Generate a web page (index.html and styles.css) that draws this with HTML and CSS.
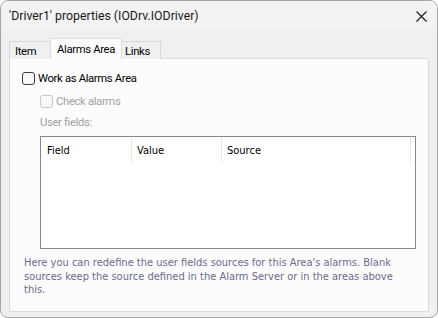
FILE: index.html
```html
<!DOCTYPE html>
<html>
<head>
<meta charset="utf-8">
<link rel="stylesheet" href="styles.css">
</head>
<body>
<div class="window">
  <div class="titlebar">
    <span class="title">'Driver1' properties (IODrv.IODriver)</span>
    <svg class="close" width="11" height="11" viewBox="0 0 11 11"><path d="M0.5 0.5 L10.5 10.5 M10.5 0.5 L0.5 10.5" stroke="#1a1a1a" stroke-width="1.1" fill="none"/></svg>
  </div>
  <div class="client">
    <div class="tabs">
      <div class="tab tab-item">Item</div>
      <div class="tab tab-active">Alarms Area</div>
      <div class="tab tab-links">Links</div>
    </div>
    <div class="panel">
      <label class="check-row">
        <span class="box"></span>
        <span class="check-text">Work as Alarms Area</span>
      </label>
      <label class="check-row indent disabled">
        <span class="box"></span>
        <span class="check-text">Check alarms</span>
      </label>
      <div class="field-label indent">User fields:</div>
      <div class="list indent">
        <div class="list-head">
          <div class="col col-field">Field</div>
          <div class="col col-value">Value</div>
          <div class="col col-source">Source</div>
        </div>
      </div>
      <p class="help">Here you can redefine the user fields sources for this Area's alarms. Blank sources keep the source defined in the Alarm Server or in the areas above this.</p>
    </div>
  </div>
</div>
</body>
</html>
```

FILE: styles.css
```css
html, body {
  margin: 0;
  padding: 0;
  background: #ffffff;
}
.window {
  box-sizing: border-box;
  width: 438px;
  height: 318px;
  border: 1px solid #a6a6a6;
  border-radius: 8px;
  overflow: hidden;
  background: #f0f0f0;
  display: flex;
  flex-direction: column;
  font-family: "Roboto", "Noto Sans", sans-serif;
  font-size: 11.3px;
  letter-spacing: -0.35px;
  color: #000000;
}
.titlebar {
  height: 29px;
  flex: none;
  background: #f3f3f3;
  display: flex;
  align-items: center;
  justify-content: space-between;
  padding: 0 10px 0 8px;
}
.title {
  font-size: 12.3px;
  letter-spacing: 0;
  white-space: nowrap;
  color: #1a1a1a;
}
.close {
  display: block;
  margin-top: 1px;
}
.client {
  padding: 8px 8px 5px 8px;
  flex: 1;
  min-height: 0;
  display: flex;
  flex-direction: column;
}
.tabs {
  display: flex;
  align-items: flex-end;
  height: 21px;
  flex: none;
  margin-bottom: -1px;
  position: relative;
  z-index: 1;
}
.tab {
  box-sizing: border-box;
  height: 18px;
  border: 1px solid #d9d9d9;
  border-bottom: none;
  background: #f0f0f0;
  display: flex;
  align-items: center;
  padding-top: 2px;
  white-space: nowrap;
}
.tab-item {
  width: 41px;
  padding-left: 5px;
  border-right: none;
}
.tab-active {
  width: 72px;
  height: 21px;
  background: #fcfcfc;
  padding-left: 6px;
  padding-top: 0;
  border-color: #dcdcdc;
}
.tab-links {
  width: 39px;
  padding-left: 3px;
  border-left: none;
}
.panel {
  box-sizing: border-box;
  flex: 1;
  min-height: 0;
  width: 420px;
  border: 1px solid #dcdcdc;
  background: #fcfcfc;
  padding: 12px 12px 0 12px;
  display: flex;
  flex-direction: column;
}
.check-row {
  display: flex;
  align-items: center;
  height: 15px;
  flex: none;
}
.check-row + .check-row {
  margin-top: 8px;
}
.box {
  box-sizing: border-box;
  width: 13px;
  height: 13px;
  border: 1px solid #3c3c3c;
  border-radius: 3px;
  background: #f7f7f7;
  margin-right: 3px;
  flex: none;
}
.indent {
  margin-left: 18px;
}
.disabled {
  color: #a2a2a2;
}
.disabled .box {
  border-color: #c9c9c9;
  background: #f9f9f9;
}
.field-label {
  margin-top: 6px;
  height: 15px;
  line-height: 15px;
  flex: none;
  color: #a2a2a2;
}
.list {
  box-sizing: border-box;
  flex: none;
  margin-top: 6px;
  width: 376px;
  height: 113px;
  border: 1px solid #828790;
  background: #ffffff;
}
.list-head {
  display: flex;
  height: 25px;
  padding-top: 1px;
  box-sizing: border-box;
  font-family: "DejaVu Sans Condensed", "DejaVu Sans", sans-serif;
  font-size: 11px;
  letter-spacing: 0;
  color: #000000;
}
.col {
  box-sizing: border-box;
  border-right: 1px solid #e5e5e5;
  padding-left: 6px;
  display: flex;
  align-items: center;
}
.col-field { width: 91px; }
.col-value { width: 90px; padding-left: 5px; }
.col-source { width: 189px; padding-left: 5px; }
.help {
  flex: none;
  margin: 7px 0 0 2px;
  font-family: "DejaVu Sans Condensed", "DejaVu Sans", sans-serif;
  font-size: 11px;
  letter-spacing: 0;
  line-height: 13.5px;
  color: #6a6a90;
}
```
